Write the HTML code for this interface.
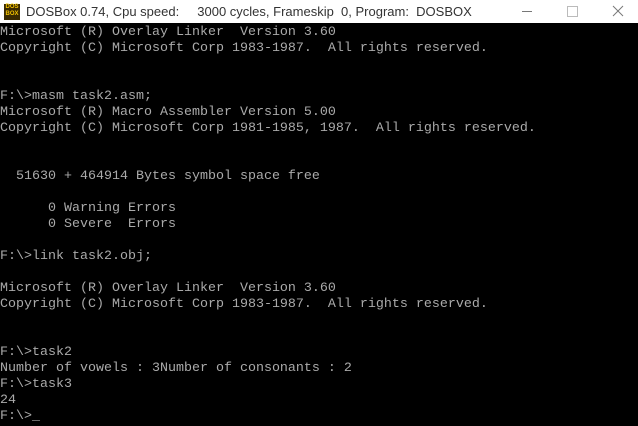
<!DOCTYPE html>
<html><head><meta charset="utf-8"><style>
html,body{margin:0;padding:0;width:638px;height:426px;overflow:hidden;background:#000}
#tb{position:absolute;left:0;top:0;width:638px;height:23px;background:#fff}
#title{position:absolute;left:26px;top:4px;font:13px "Liberation Sans",sans-serif;color:#333;white-space:pre}
#icon{position:absolute;left:4px;top:4px;width:16px;height:16px;background:#3a2a00;font:bold 6px "Liberation Sans",sans-serif;color:#f5c400;line-height:7px;text-align:center}
pre{position:absolute;left:0;top:25px;margin:0;font-family:"Liberation Mono",monospace;font-size:13.33px;line-height:16px;color:#aaa}
</style></head><body>
<div id="tb">
<div id="icon">DOS<br>BOX</div>
<div id="title">DOSBox 0.74, Cpu speed:     3000 cycles, Frameskip  0, Program:  DOSBOX</div>
<svg style="position:absolute;left:0;top:0" width="638" height="23">
<line x1="522" y1="11.5" x2="532" y2="11.5" stroke="#777" stroke-width="1"/>
<rect x="567.5" y="6.5" width="10" height="10" fill="none" stroke="#bbb"/>
<line x1="613" y1="6" x2="623" y2="16" stroke="#777"/>
<line x1="623" y1="6" x2="613" y2="16" stroke="#777"/>
</svg>
</div>
<pre>Microsoft (R) Overlay Linker  Version 3.60
Copyright (C) Microsoft Corp 1983-1987.  All rights reserved.


F:\>masm task2.asm;
Microsoft (R) Macro Assembler Version 5.00
Copyright (C) Microsoft Corp 1981-1985, 1987.  All rights reserved.


  51630 + 464914 Bytes symbol space free

      0 Warning Errors
      0 Severe  Errors

F:\>link task2.obj;

Microsoft (R) Overlay Linker  Version 3.60
Copyright (C) Microsoft Corp 1983-1987.  All rights reserved.


F:\>task2
Number of vowels : 3Number of consonants : 2
F:\>task3
24
F:\>_</pre>
</body></html>
